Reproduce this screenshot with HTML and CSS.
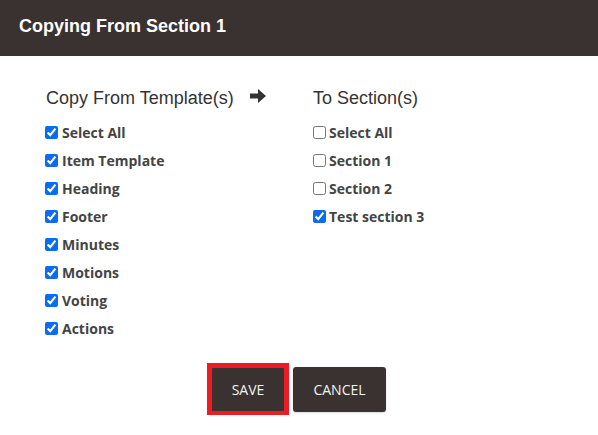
FILE: index.html
```html
<!DOCTYPE html>
<html>
<head>
<meta charset="utf-8">
<link rel="stylesheet" href="styles.css">
</head>
<body>
<div class="dialog">
  <div class="header">Copying From Section 1</div>
  <div class="content">
    <div class="col col-from">
      <div class="heading">Copy From Template(s)
        <svg class="arrow" width="18" height="16" viewBox="0 0 18 16"><path d="M1 5.5h8V1l8 7-8 7v-4.5H1z" fill="#333"/></svg>
      </div>
      <label class="row"><input type="checkbox" checked> Select All</label>
      <label class="row"><input type="checkbox" checked> Item Template</label>
      <label class="row"><input type="checkbox" checked> Heading</label>
      <label class="row"><input type="checkbox" checked> Footer</label>
      <label class="row"><input type="checkbox" checked> Minutes</label>
      <label class="row"><input type="checkbox" checked> Motions</label>
      <label class="row"><input type="checkbox" checked> Voting</label>
      <label class="row"><input type="checkbox" checked> Actions</label>
    </div>
    <div class="col col-to">
      <div class="heading">To Section(s)</div>
      <label class="row"><input type="checkbox"> Select All</label>
      <label class="row"><input type="checkbox"> Section 1</label>
      <label class="row"><input type="checkbox"> Section 2</label>
      <label class="row"><input type="checkbox" checked> Test section 3</label>
    </div>
  </div>
  <div class="footer">
    <span class="focus-ring"><button class="btn btn-save">SAVE</button></span>
    <button class="btn btn-cancel">CANCEL</button>
  </div>
</div>
</body>
</html>
```
FILE: styles.css
```css
html, body { margin: 0; padding: 0; background: #fff; }
.dialog { width: 598px; height: 435px; display: flex; flex-direction: column; }
.header {
  height: 56px; box-sizing: border-box; background: #3a3230; color: #fff;
  font: bold 18px "Liberation Sans", Arial, sans-serif;
  padding: 16px 0 0 19px;
}
.content { display: flex; padding: 29px 0 0 45px; }
.col { display: flex; flex-direction: column; }
.col-from { width: 268px; }
.heading {
  font: 18px "Liberation Sans", Arial, sans-serif; color: #333;
  height: 26px; margin-left: 1px; margin-bottom: 7px; display: flex; align-items: center;
}
.col-to .heading { margin-left: 0; }
.arrow { margin-left: 15px; margin-top: -4px; }
.row {
  display: flex; align-items: center; height: 28px;
  font: bold 14px "Open Sans", sans-serif; color: #444;
}
.row input { margin: 0 4px 0 0; width: 13px; height: 13px; accent-color: #0a6cf0; }
.col-to .row input { margin-right: 3px; }
.footer {
  display: flex; justify-content: center; align-items: center; gap: 4px;
  margin-top: auto; padding-bottom: 20px; padding-right: 5px;
}
.focus-ring { display: block; border: 5px solid #ec1c24; border-bottom-width: 4px; background: #ec1c24; line-height: 0; }
.btn {
  background: #3a3230; color: #f2f2f2; border: none; border-radius: 3px;
  font: 14px "Open Sans", sans-serif; padding: 0; margin: 0;
}
.btn-save { width: 72px; height: 43px; border-radius: 1px; }
.btn-cancel { width: 93px; height: 45px; box-shadow: 0 1px 2px rgba(0,0,0,0.15); }
```
